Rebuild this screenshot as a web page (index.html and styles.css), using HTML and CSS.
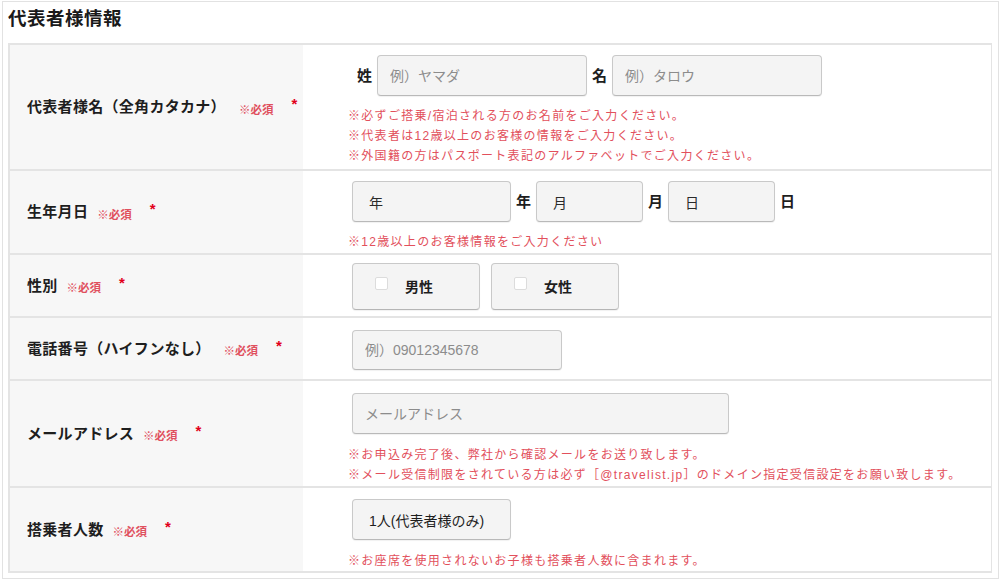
FILE: index.html
```html
<!DOCTYPE html>
<html lang="ja">
<head>
<meta charset="utf-8">
<title>代表者様情報</title>
<link rel="stylesheet" href="styles.css">
</head>
<body>
<div class="page">
  <h2 class="title">代表者様情報</h2>
  <div class="table">
    <div class="row row-name">
      <div class="label"><span class="label-text">代表者様名（全角カタカナ）</span><span class="req req-wide">※必須</span><span class="star">*</span></div>
      <div class="cell">
        <div class="fields fields-name">
          <span class="unit">姓</span>
          <input class="field w210" type="text" placeholder="例）ヤマダ">
          <span class="unit">名</span>
          <input class="field w210" type="text" placeholder="例）タロウ">
        </div>
        <ul class="notes">
          <li>※必ずご搭乗/宿泊される方のお名前をご入力ください。</li>
          <li>※代表者は12歳以上のお客様の情報をご入力ください。</li>
          <li>※外国籍の方はパスポート表記のアルファベットでご入力ください。</li>
        </ul>
      </div>
    </div>
    <div class="row row-birth">
      <div class="label"><span class="label-text">生年月日</span><span class="req">※必須</span><span class="star">*</span></div>
      <div class="cell">
        <div class="fields fields-date">
          <div class="field select w159">年</div>
          <span class="unit">年</span>
          <div class="field select w107">月</div>
          <span class="unit">月</span>
          <div class="field select w107">日</div>
          <span class="unit">日</span>
        </div>
        <ul class="notes">
          <li>※12歳以上のお客様情報をご入力ください</li>
        </ul>
      </div>
    </div>
    <div class="row row-sex">
      <div class="label"><span class="label-text">性別</span><span class="req">※必須</span><span class="star">*</span></div>
      <div class="cell">
        <div class="fields gap-radio">
          <label class="choice"><span class="box"></span><span class="choice-text">男性</span></label>
          <label class="choice"><span class="box"></span><span class="choice-text">女性</span></label>
        </div>
      </div>
    </div>
    <div class="row row-tel">
      <div class="label"><span class="label-text">電話番号（ハイフンなし）</span><span class="req req-wide">※必須</span><span class="star">*</span></div>
      <div class="cell">
        <div class="fields">
          <input class="field w210 h40" type="text" placeholder="例）09012345678">
        </div>
      </div>
    </div>
    <div class="row row-mail">
      <div class="label"><span class="label-text">メールアドレス</span><span class="req">※必須</span><span class="star">*</span></div>
      <div class="cell">
        <div class="fields">
          <input class="field w377" type="text" placeholder="メールアドレス">
        </div>
        <ul class="notes">
          <li>※お申込み完了後、弊社から確認メールをお送り致します。</li>
          <li>※メール受信制限をされている方は必ず［@travelist.jp］のドメイン指定受信設定をお願い致します。</li>
        </ul>
      </div>
    </div>
    <div class="row row-people">
      <div class="label"><span class="label-text">搭乗者人数</span><span class="req">※必須</span><span class="star">*</span></div>
      <div class="cell">
        <div class="fields">
          <div class="field select w159 value-plain">1人(代表者様のみ)</div>
        </div>
        <ul class="notes">
          <li>※お座席を使用されないお子様も搭乗者人数に含まれます。</li>
        </ul>
      </div>
    </div>
  </div>
</div>
</body>
</html>
```
FILE: styles.css
```css
* {
  box-sizing: border-box;
}

html, body {
  margin: 0;
  padding: 0;
  background: #ffffff;
}

body {
  font-family: "Liberation Sans", "Noto Sans CJK JP", sans-serif;
  color: #222222;
}

.page {
  margin: 1px 1px 0 2px;
  height: 578px;
  border: 1px solid #e2e2e2;
  padding: 4px 6px 0 5px;
  overflow: hidden;
}

.title {
  margin: 0 0 11px 0;
  font-size: 18.5px;
  line-height: 26px;
  font-weight: 700;
  letter-spacing: 0.5px;
  color: #1a1a1a;
}

.table {
  border: 2px solid #e4e4e4;
  border-right-width: 1px;
}

.row {
  display: grid;
  grid-template-columns: 293px 1fr;
  border-bottom: 2px solid #e4e4e4;
}

.row:last-child {
  border-bottom: none;
}

.label {
  background: #f7f7f7;
  display: flex;
  align-items: center;
  padding-left: 17px;
}

.label-text {
  font-size: 15px;
  font-weight: 700;
  line-height: 20px;
  letter-spacing: 0.3px;
  color: #1e1e1e;
}

.req {
  font-size: 11.5px;
  font-weight: 700;
  color: #e0505e;
  margin-left: 9px;
  margin-top: 5px;
  line-height: 14px;
}

.req-wide {
  margin-left: 13px;
}

.star {
  color: #e2001a;
  font-size: 15px;
  font-weight: 700;
  margin-left: 18px;
  margin-bottom: 6px;
  line-height: 14px;
}

.cell {
  padding-left: 45px;
}

.fields {
  display: flex;
  align-items: center;
  gap: 6px;
  margin-left: 4px;
}

.fields-name {
  margin-left: 9px;
  gap: 5px;
}

.fields-date {
  gap: 5px;
}

.unit {
  font-size: 15px;
  font-weight: 700;
  color: #1e1e1e;
  line-height: 20px;
}

.field {
  height: 41px;
  background: #f4f4f4;
  border: 1px solid #c9c9c9;
  border-bottom-color: #b9b9b9;
  border-radius: 4px;
  box-shadow: 0 1px 1px rgba(0, 0, 0, 0.06);
  padding: 0 12px;
  font-family: "Liberation Sans", "Noto Sans CJK JP", sans-serif;
  font-size: 14px;
  color: #333333;
  outline: none;
  margin: 0;
}

.field::placeholder {
  color: #8c8c8c;
}

.select {
  display: flex;
  align-items: center;
  padding-left: 16px;
  color: #2a2a2a;
}

.value-plain {
  color: #1e1e1e;
}

.w210 { width: 210px; }
.w159 { width: 159px; }
.w107 { width: 107px; }
.w377 { width: 377px; }
.h40 { height: 40px; }

.gap-radio {
  gap: 11px;
}

.choice {
  width: 128px;
  height: 47px;
  background: #f4f4f4;
  border: 1px solid #c9c9c9;
  border-bottom-color: #b5b5b5;
  border-radius: 4px;
  box-shadow: 0 1px 1px rgba(0, 0, 0, 0.06);
  display: flex;
  align-items: center;
  padding-left: 22px;
}

.box {
  width: 13px;
  height: 13px;
  background: #ffffff;
  border: 1px solid #dcdcdc;
  border-radius: 2px;
  margin-bottom: 6px;
}

.choice-text {
  margin-left: 17px;
  font-size: 14px;
  font-weight: 700;
  color: #1e1e1e;
  line-height: 20px;
}

.notes {
  list-style: none;
  margin: 0;
  padding: 0;
}

.notes li {
  font-size: 12px;
  line-height: 20px;
  letter-spacing: 1.3px;
  color: #e2505c;
  white-space: nowrap;
}

.row-name .cell { padding-top: 10px; padding-bottom: 3px; }
.row-name .notes { margin-top: 10px; }

.row-birth .cell { padding-top: 10px; padding-bottom: 1px; }
.row-birth .notes { margin-top: 10px; }

.row-sex .cell { padding-top: 8px; padding-bottom: 6px; }

.row-tel .cell { padding-top: 12px; padding-bottom: 9px; }

.row-mail .cell { padding-top: 12px; padding-bottom: 1px; }
.row-mail .notes { margin-top: 11px; }

.row-people .cell { padding-top: 11px; padding-bottom: 0; }
.row-people .notes { margin-top: 11px; }
```
